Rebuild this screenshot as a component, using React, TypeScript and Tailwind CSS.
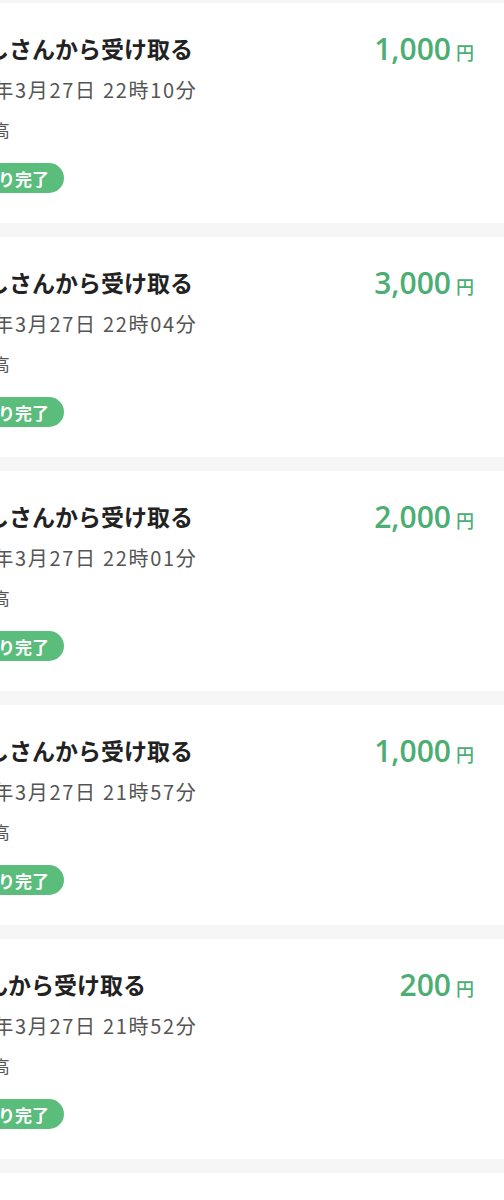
import { FC } from "react";

interface HistoryItemProps {
  title: string;
  titleOffset: string;
  date: string;
  amount: string;
}

const items: HistoryItemProps[] = [
  { title: "たかしさんから受け取る", titleOffset: "-ml-[60px]", date: "2024年3月27日 22時10分", amount: "1,000" },
  { title: "たかしさんから受け取る", titleOffset: "-ml-[60px]", date: "2024年3月27日 22時04分", amount: "3,000" },
  { title: "たかしさんから受け取る", titleOffset: "-ml-[60px]", date: "2024年3月27日 22時01分", amount: "2,000" },
  { title: "たかしさんから受け取る", titleOffset: "-ml-[60px]", date: "2024年3月27日 21時57分", amount: "1,000" },
  { title: "ゆいさんから受け取る", titleOffset: "-ml-[84px]", date: "2024年3月27日 21時52分", amount: "200" },
];

/* ONE HISTORY ROW */

const HistoryItem: FC<HistoryItemProps> = ({ title, titleOffset, date, amount }) => {
  return (
    <div className="h-[220px] shrink-0 bg-white flex justify-between overflow-hidden">
      {/* Left: title, date, wallet, status */}
      <div className="flex flex-col items-start pt-[29px] whitespace-nowrap">
        <p className={`${titleOffset} text-[23px] leading-[32px] font-bold text-[#222222]`}>{title}</p>
        <p className="-ml-[58px] mt-[12px] text-[20px] leading-[28px] tracking-[1.7px] text-[#555555]">{date}</p>
        <p className="-ml-[81px] mt-[13px] text-[17px] leading-[26px] text-[#555555]">PayPay残高</p>
        <div className="-ml-[68px] mt-[20px] h-[30px] flex items-center rounded-full bg-[#5bbd7b] px-[15px]">
          <span className="text-[17px] leading-none font-bold text-white">受け取り完了</span>
        </div>
      </div>
      {/* Right: amount */}
      <div
        className="pt-[28px] pr-[30px] flex items-baseline text-[#4cae73] whitespace-nowrap"
        style={{ fontFamily: '"Open Sans", "Noto Sans CJK JP", sans-serif' }}
      >
        <span className="text-[30px] leading-[36px] font-semibold">{amount}</span>
        <span className="ml-[5px] text-[18px] font-medium" style={{ fontFamily: '"Noto Sans CJK JP", sans-serif' }}>
          円
        </span>
      </div>
    </div>
  );
};

export default function App() {
  return (
    <div
      className="w-[504px] h-[1200px] overflow-hidden bg-[#f6f6f6] pt-[3px] flex flex-col gap-[14px]"
      style={{ fontFamily: '"Noto Sans CJK JP", "Noto Sans", sans-serif' }}
    >
      {items.map((item, i) => (
        <HistoryItem key={i} {...item} />
      ))}
      <div className="h-[40px] bg-white shrink-0" />
    </div>
  );
}
